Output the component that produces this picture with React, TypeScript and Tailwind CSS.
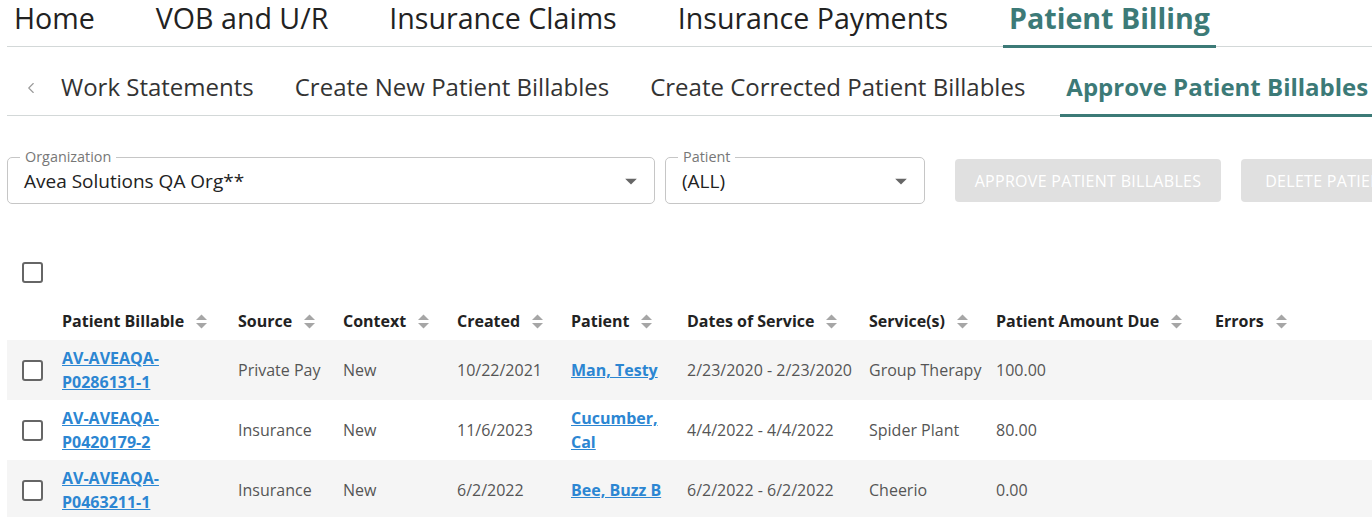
import { ChevronLeft } from "lucide-react";

const TEAL = "#3c7a77";

function SortIcon() {
  return (
    <svg width="13" height="17" viewBox="0 0 13 17" className="inline-block ml-[11px] -mt-[2px] align-middle">
      <path d="M1 7 L6.5 1.5 L12 7 Z" fill="#a6a6a6" />
      <path d="M1 10 L6.5 15.5 L12 10 Z" fill="#a6a6a6" />
    </svg>
  );
}

function Box() {
  return <div className="w-[21px] h-[21px] border-2 border-[#666] rounded-[3px] bg-white" />;
}

function DropArrow() {
  return (
    <svg width="28" height="28" viewBox="0 0 24 24">
      <path d="M7 10l5 5 5-5z" fill="#666" />
    </svg>
  );
}

function Select({ label, value, width }: { label: string; value: string; width: string }) {
  return (
    <div className={`relative flex-none h-[47px] border border-[#c6c6c6] rounded-[5px] flex items-center justify-between pl-[16px] pr-[9px] ${width}`}>
      <span className="absolute -top-[9px] left-[12px] px-[5px] bg-white text-[14.4px] leading-[16px] text-[#777]">{label}</span>
      <span className="text-[19px] text-[#222] pt-[1px]">{value}</span>
      <DropArrow />
    </div>
  );
}

const topTabs = ["Home", "VOB and U/R", "Insurance Claims", "Insurance Payments", "Patient Billing"];
const subTabs = ["Work Statements", "Create New Patient Billables", "Create Corrected Patient Billables", "Approve Patient Billables"];

const columns = [
  { name: "Patient Billable", w: "w-[176px]" },
  { name: "Source", w: "w-[105px]" },
  { name: "Context", w: "w-[114px]" },
  { name: "Created", w: "w-[114px]" },
  { name: "Patient", w: "w-[116px]" },
  { name: "Dates of Service", w: "w-[182px]" },
  { name: "Service(s)", w: "w-[127px]" },
  { name: "Patient Amount Due", w: "w-[219px]" },
  { name: "Errors", w: "w-[170px]" },
];

const rows = [
  { id: "AV-AVEAQA-P0286131-1", source: "Private Pay", context: "New", created: "10/22/2021", patient: "Man, Testy", dates: "2/23/2020 - 2/23/2020", service: "Group Therapy", amount: "100.00" },
  { id: "AV-AVEAQA-P0420179-2", source: "Insurance", context: "New", created: "11/6/2023", patient: "Cucumber, Cal", dates: "4/4/2022 - 4/4/2022", service: "Spider Plant", amount: "80.00" },
  { id: "AV-AVEAQA-P0463211-1", source: "Insurance", context: "New", created: "6/2/2022", patient: "Bee, Buzz B", dates: "6/2/2022 - 6/2/2022", service: "Cheerio", amount: "0.00" },
];

export default function App() {
  return (
    <div className="w-[1372px] h-[517px] overflow-hidden bg-white" style={{ fontFamily: '"Open Sans", sans-serif' }}>
      {/* top navigation */}
      <div className="ml-[7px] pl-[1px] flex gap-[49px] items-start border-b border-[#d3d8d8] h-[47px]">
        {topTabs.map((t) => {
          const active = t === "Patient Billing";
          return (
            <div
              key={t}
              className={`flex-none px-[6px] text-[28.6px] leading-[35px] whitespace-nowrap ${active ? "h-[48px] border-b-[3px] font-bold" : "h-[46px] text-[#222]"}`}
              style={active ? { color: TEAL, borderColor: TEAL } : undefined}
            >
              {t}
            </div>
          );
        })}
      </div>

      {/* sub navigation */}
      <div className="ml-[7px] flex items-start border-b border-[#d3d8d8] h-[69px]">
        <div className="flex-none w-[48px] h-[68px] pt-[13px] flex items-center justify-center">
          <ChevronLeft size={18} strokeWidth={1.5} color="#9a9a9a" />
        </div>
        <div className="flex flex-none gap-[29px]">
          {subTabs.map((t) => {
            const active = t === "Approve Patient Billables";
            return (
              <div
                key={t}
                className={`flex-none px-[6px] pt-[24px] text-[24px] leading-[32px] whitespace-nowrap ${active ? "h-[70px] border-b-[3px] font-bold" : "h-[68px] text-[#333]"}`}
                style={active ? { color: TEAL, borderColor: TEAL } : undefined}
              >
                {t}
              </div>
            );
          })}
        </div>
      </div>

      {/* filters */}
      <div className="ml-[7px] mt-[41px] flex items-center whitespace-nowrap">
        <Select label="Organization" value="Avea Solutions QA Org**" width="w-[648px]" />
        <div className="w-[10px] flex-none" />
        <Select label="Patient" value="(ALL)" width="w-[260px]" />
        <button className="ml-[30px] w-[266px] h-[43px] rounded-[4px] bg-[#e0e0e0] text-white text-[16px] tracking-[0.3px] flex-none">
          APPROVE PATIENT BILLABLES
        </button>
        <button className="ml-[20px] w-[260px] h-[43px] rounded-[4px] bg-[#e0e0e0] text-white text-[16px] tracking-[0.3px] flex-none">
          DELETE PATIENT BILLABLES
        </button>
      </div>

      {/* table toolbar */}
      <div className="ml-[22px] mt-[58px] mb-[17px]">
        <Box />
      </div>

      <table className="ml-[7px] table-fixed border-collapse text-[16px] w-[1378px]">
        <colgroup>
          <col className="w-[55px]" />
          {columns.map((c) => (
            <col key={c.name} className={c.w} />
          ))}
        </colgroup>
        <thead>
          <tr className="h-[40px]">
            <th />
            {columns.map((c) => (
              <th key={c.name} className="text-left font-bold text-[#222] whitespace-nowrap p-0 pt-[1px]">
                {c.name}
                <SortIcon />
              </th>
            ))}
          </tr>
        </thead>
        <tbody>
          {rows.map((r, i) => (
            <tr key={r.id} className={`h-[60px] ${i % 2 === 0 ? "bg-[#f5f5f5]" : "bg-white"}`}>
              <td className="pl-[15px] p-0 align-middle">
                <Box />
              </td>
              <td className="p-0 pr-[8px] leading-[24px]">
                <a className="font-bold text-[#2c86d2] underline break-words">{r.id}</a>
              </td>
              <td className="p-0 text-[#555] whitespace-nowrap">{r.source}</td>
              <td className="p-0 text-[#555]">{r.context}</td>
              <td className="p-0 text-[#555]">{r.created}</td>
              <td className="p-0 pr-[8px] leading-[24px]">
                <a className="font-bold text-[#2c86d2] underline">{r.patient}</a>
              </td>
              <td className="p-0 text-[#555] whitespace-nowrap">{r.dates}</td>
              <td className="p-0 text-[#555] whitespace-nowrap">{r.service}</td>
              <td className="p-0 text-[#555]">{r.amount}</td>
              <td className="p-0" />
            </tr>
          ))}
        </tbody>
      </table>
    </div>
  );
}
